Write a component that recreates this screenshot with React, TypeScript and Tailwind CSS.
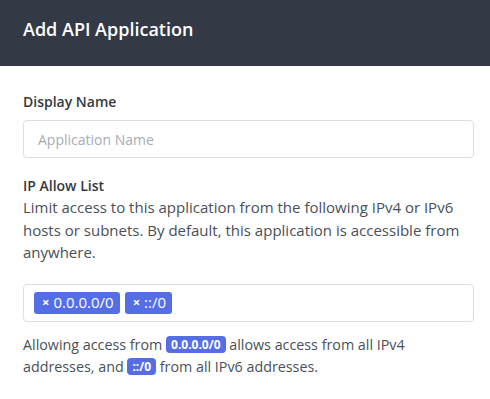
import React from "react";

export default function App() {
  return (
    <div className="w-[490px] h-[399px] bg-white overflow-hidden" style={{ fontFamily: '"Open Sans", "Noto Sans", sans-serif' }}>
      <div className="h-[66px] bg-[#333a46] flex items-start pt-[20px] px-[23px]">
        <h1 className="text-[18px] font-semibold text-white leading-[18px]">Add API Application</h1>
      </div>
      <div className="px-[23px] pt-[25px] text-[#495057]">
        <label className="block text-[14px] font-semibold leading-[21px] text-[#343a40]">Display Name</label>
        <input
          className="block mt-[8px] w-[451px] h-[38px] border border-[#dcdfe3] rounded-[4px] px-[14px] text-[14px] placeholder:text-[#a6adb5] outline-none"
          placeholder="Application Name"
        />
        <div className="mt-[17px] text-[14px] font-semibold leading-[21px] text-[#343a40]">IP Allow List</div>
        <p className="mt-0 text-[15px] leading-[22.5px] w-[451px]">
          Limit access to this application from the following IPv4 or IPv6 hosts or subnets. By default, this application is accessible from anywhere.
        </p>
        <div className="mt-[20px] w-[451px] h-[38px] border border-[#dcdfe3] rounded-[4px] flex items-center px-[10px] gap-[5px]">
          <span className="h-[22px] rounded-[3px] bg-[#556ee6] text-white text-[15px] flex items-center pl-[8px] pr-[6px] gap-[4px]">
            <span className="text-[13px] font-bold">×</span>0.0.0.0/0
          </span>
          <span className="h-[22px] rounded-[3px] bg-[#556ee6] text-white text-[15px] flex items-center pl-[8px] pr-[6px] gap-[4px]">
            <span className="text-[13px] font-bold">×</span>::/0
          </span>
        </div>
        <p className="mt-[12px] text-[14.3px] leading-[22px] w-[451px]">
          Allowing access from{" "}
          <span className="inline-block rounded-[4px] bg-[#556ee6] text-white text-[12px] font-bold leading-[17px] px-[5px] align-[1px]">0.0.0.0/0</span>{" "}
          allows access from all IPv4 addresses, and{" "}
          <span className="inline-block rounded-[4px] bg-[#556ee6] text-white text-[12px] font-bold leading-[17px] px-[5px] align-[1px]">::/0</span>{" "}
          from all IPv6 addresses.
        </p>
      </div>
    </div>
  );
}
